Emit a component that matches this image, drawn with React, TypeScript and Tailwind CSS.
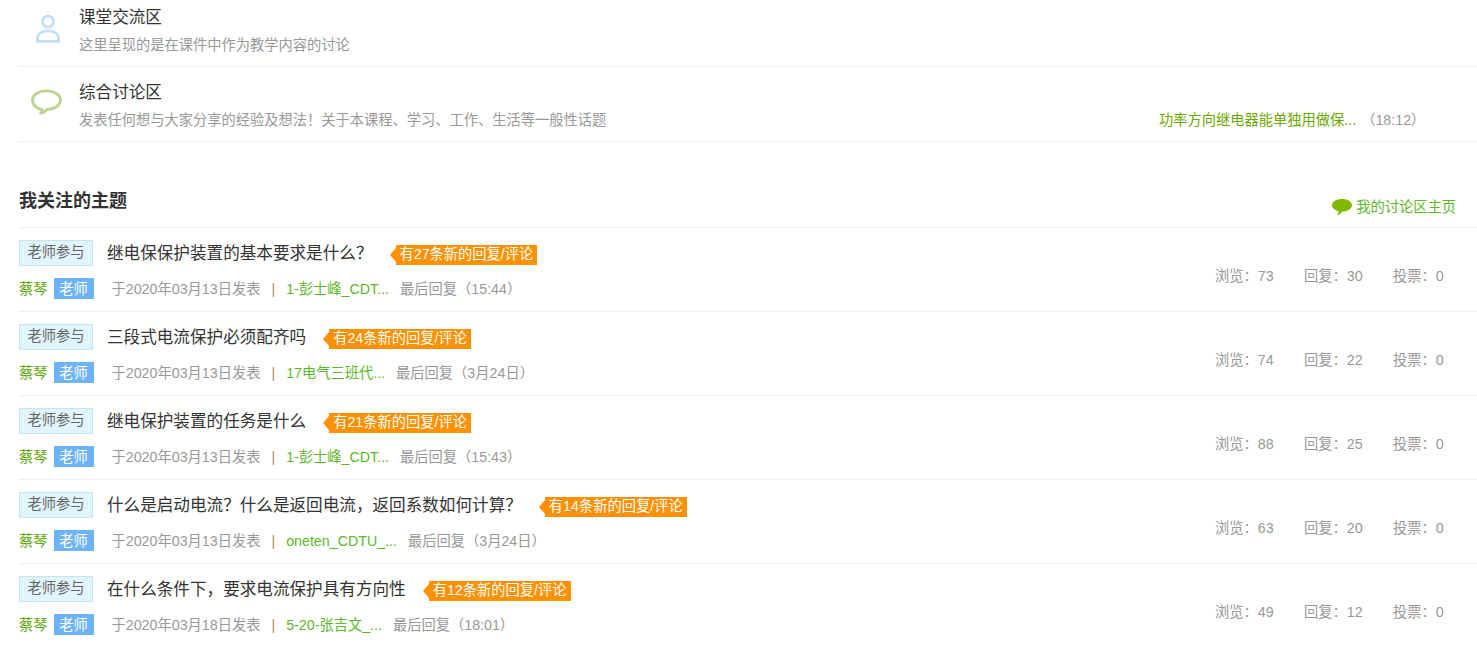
const font = { fontFamily: '"Liberation Sans", "Noto Sans CJK SC", sans-serif' };

type Topic = {
  title: string;
  replies: string;
  date: string;
  user: string;
  last: string;
  views: number;
  count: number;
  votes: number;
};

const topics: Topic[] = [
  { title: "继电保保护装置的基本要求是什么？", replies: "有27条新的回复/评论", date: "于2020年03月13日发表", user: "1-彭士峰_CDT...", last: "最后回复（15:44）", views: 73, count: 30, votes: 0 },
  { title: "三段式电流保护必须配齐吗", replies: "有24条新的回复/评论", date: "于2020年03月13日发表", user: "17电气三班代...", last: "最后回复（3月24日）", views: 74, count: 22, votes: 0 },
  { title: "继电保护装置的任务是什么", replies: "有21条新的回复/评论", date: "于2020年03月13日发表", user: "1-彭士峰_CDT...", last: "最后回复（15:43）", views: 88, count: 25, votes: 0 },
  { title: "什么是启动电流？什么是返回电流，返回系数如何计算？", replies: "有14条新的回复/评论", date: "于2020年03月13日发表", user: "oneten_CDTU_...", last: "最后回复（3月24日）", views: 63, count: 20, votes: 0 },
  { title: "在什么条件下，要求电流保护具有方向性", replies: "有12条新的回复/评论", date: "于2020年03月18日发表", user: "5-20-张吉文_...", last: "最后回复（18:01）", views: 49, count: 12, votes: 0 },
];

function PersonIcon() {
  return (
    <svg width="24" height="31" viewBox="0 0 26 33" fill="none" stroke="#c2e0fb" strokeWidth="3">
      <circle cx="13" cy="9" r="6" />
      <path d="M1.500 30.500v-3c0-5 4.500-8.500 11.500-8.500s11.500 3.500 11.500 8.500v3z" />
    </svg>
  );
}

function BubbleIcon() {
  return (
    <svg width="31" height="26" viewBox="0 0 32 27" fill="none" stroke="#bdd390" strokeWidth="3">
      <path d="M16 2c8 0 14.500 3.800 14.500 9.500S24 21 17.500 21c-1 0-1.500.5-2.500 1.500-1.500 1.500-3.500 2.500-5 2.500 1-1 1.500-2 1.500-3.500C6 20.500 1.500 17 1.500 11.500S8 2 16 2z" strokeLinejoin="round" />
    </svg>
  );
}

function SmallBubble() {
  return (
    <svg width="20" height="17" viewBox="0 0 20 17" fill="#80b900">
      <path d="M10 0c5.500 0 10 2.700 10 6.300 0 3.500-4.500 6.300-9.500 6.300-1.500 1.500-3 3.200-5 4 .7-1.300 1-3 .8-4.500C2.700 11.200 0 9 0 6.300 0 2.700 4.500 0 10 0z" />
    </svg>
  );
}

function ForumRow({ icon, name, desc, side, first }: { icon: React.ReactNode; name: string; desc: string; side?: React.ReactNode; first?: boolean }) {
  return (
    <div className={`flex border-b border-[#eeeeee] ${first ? "h-[67px]" : "h-[75px]"}`}>
      <div className={`flex w-[60px] shrink-0 justify-center ${first ? "pr-[2px] pt-[13px]" : "pr-[5px] pt-[22px]"}`}>{icon}</div>
      <div className={`flex-1 ${first ? "pt-[7px]" : "pt-[15px]"}`}>
        <div className="text-[16.6px] leading-[22px] text-[#333333]">{name}</div>
        <div className="mt-[6px] text-[14.25px] leading-[20px] text-[#999999]">{desc}</div>
      </div>
      {side}
    </div>
  );
}

function TopicRow({ t }: { t: Topic }) {
  return (
    <div className="flex h-[84px] border-b border-[#eeeeee]">
      <div className="flex-1">
        <div className="mt-[12px] flex h-[26px] items-center">
          <span className="flex h-[26px] w-[74px] items-center justify-center border border-[#c3e3fb] bg-[#e1f5fe] text-[14.25px] text-[#666666]">老师参与</span>
          <span className="ml-[14px] pt-[1px] text-[16.6px] leading-[24px] text-[#333333]">{t.title}</span>
          <span className="relative ml-[23px] mt-[3px] flex h-[20px] items-center bg-[#ff9000] px-[4px] text-[14.25px] text-white">
            <span className="absolute left-[-6px] top-[3px] h-0 w-0 border-y-[7px] border-r-[6px] border-y-transparent border-r-[#ff9000]" />
            {t.replies}
          </span>
        </div>
        <div className="mt-[12px] flex h-[21px] items-center text-[14.25px] leading-[21px]">
          <span className="pt-[2px] text-[#5fa80f]">蔡琴</span>
          <span className="ml-[6px] flex h-[21px] w-[40px] items-center justify-center bg-[#6db3f8] pt-[2px] text-white">老师</span>
          <span className="ml-[18px] pt-[2px] text-[#999999]">{t.date}</span>
          <span className="ml-[11px] pt-[2px] text-[#b08a6a]">|</span>
          <span className="ml-[11px] pt-[2px] text-[#5cb82a]">{t.user}</span>
          <span className="ml-[11px] pt-[2px] text-[#999999]">{t.last}</span>
        </div>
      </div>
      <div className="flex w-[262px] shrink-0 items-center pt-[14px] text-[14.25px] text-[#999999]">
        <span className="w-[89px]">浏览：{t.views}</span>
        <span className="w-[89px]">回复：{t.count}</span>
        <span>投票：{t.votes}</span>
      </div>
    </div>
  );
}

export default function App() {
  return (
    <div className="h-[645px] overflow-hidden bg-white pl-[19px]" style={font}>
      <ForumRow first icon={<PersonIcon />} name="课堂交流区" desc="这里呈现的是在课件中作为教学内容的讨论" />
      <ForumRow
        icon={<BubbleIcon />}
        name="综合讨论区"
        desc="发表任何想与大家分享的经验及想法！关于本课程、学习、工作、生活等一般性话题"
        side={
          <div className="w-[318px] shrink-0 pt-[43px] text-[14.25px] leading-[20px]">
            <span className="text-[#6aa800]">功率方向继电器能单独用做保...</span>
            <span className="ml-[5px] text-[#999999]">（18:12）</span>
          </div>
        }
      />
      <div className="flex h-[86px] items-end justify-between border-b border-[#eeeeee]">
        <h2 className="mb-[14px] text-[18px] font-bold leading-[24px] text-[#333333]">我关注的主题</h2>
        <div className="mb-[10px] mr-[21px] flex items-center gap-[4px] text-[14.25px] leading-[20px] text-[#5cb82a]">
          <SmallBubble />
          我的讨论区主页
        </div>
      </div>
      {topics.map((t) => (
        <TopicRow key={t.title} t={t} />
      ))}
    </div>
  );
}
